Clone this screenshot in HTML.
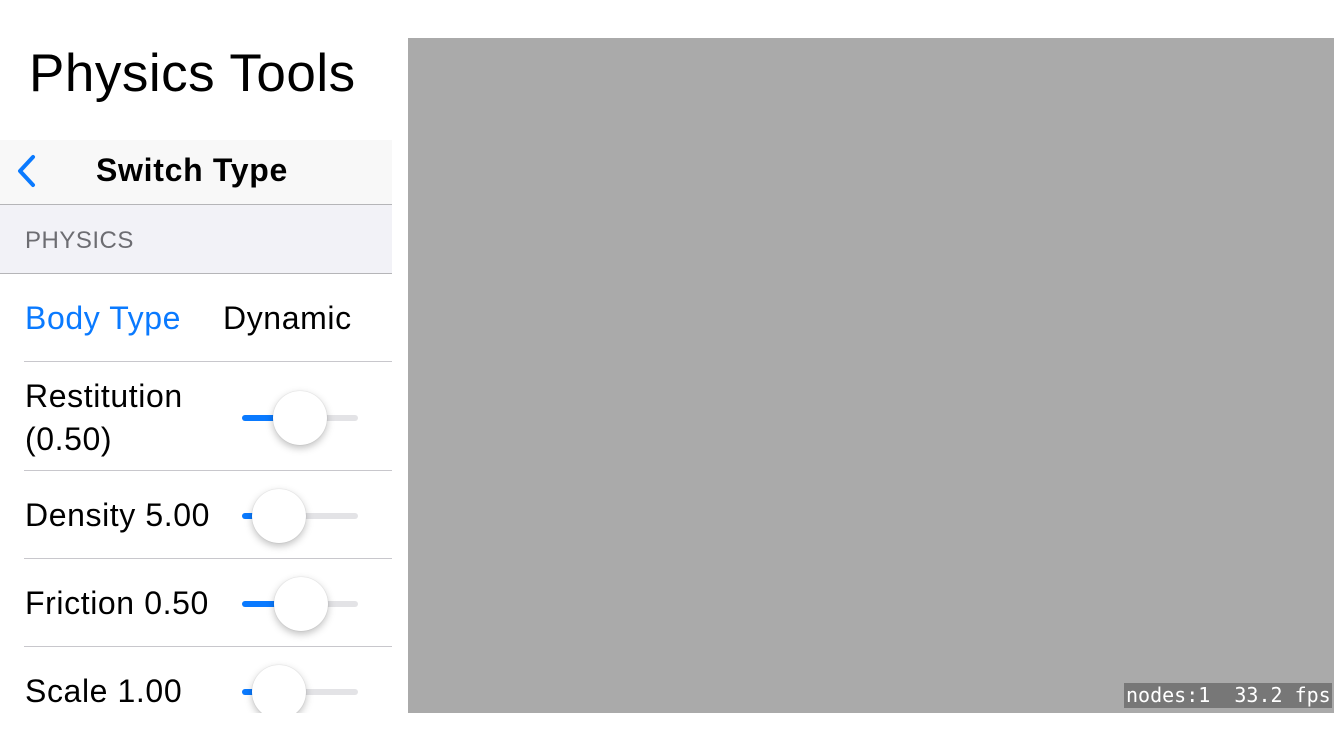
<!DOCTYPE html>
<html><head><style>
body{margin:0;width:1334px;height:750px;background:#fff;position:relative;overflow:hidden;font-family:"Liberation Sans",sans-serif}
.a{position:absolute}
.sep{position:absolute;height:1px;background:#c8c7cc}
.t{position:absolute;font-size:32px;letter-spacing:0.6px;color:#000;white-space:nowrap}
.track{position:absolute;left:242px;width:116px;height:6px;border-radius:3px;background:#e3e3e6}
.fill{position:absolute;left:0;top:0;height:6px;border-radius:3px;background:#0a7aff}
.knob{position:absolute;width:54px;height:54px;border-radius:50%;background:#fff;box-shadow:0 3px 8px rgba(0,0,0,.25),0 0 1px rgba(0,0,0,.2)}
</style></head><body>
<div class="t" style="left:29px;top:43px;font-size:53px;letter-spacing:0.5px">Physics Tools</div>
<div class="a" style="left:0;top:140px;width:392px;height:64px;background:#f8f8f8"></div>
<svg class="a" style="left:14px;top:154px" width="26" height="34"><path d="M19 3 L6 17 L19 31" stroke="#0a7aff" stroke-width="4" fill="none" stroke-linecap="round" stroke-linejoin="round"/></svg>
<div class="t" style="left:96px;top:152px;font-weight:bold;letter-spacing:0.7px">Switch Type</div>
<div class="sep" style="left:0;top:204px;width:392px;background:#b5b5b8"></div>
<div class="a" style="left:0;top:205px;width:392px;height:68px;background:#f2f2f7"></div>
<div class="t" style="left:25px;top:227px;font-size:24px;letter-spacing:0.5px;color:#6d6d72">PHYSICS</div>
<div class="sep" style="left:0;top:273px;width:392px;background:#b5b5b8"></div>
<div class="t" style="left:25px;top:300px;color:#0a7aff">Body Type</div>
<div class="t" style="left:223px;top:300px">Dynamic</div>
<div class="sep" style="left:24px;top:361px;width:368px"></div>
<div class="t" style="left:25px;top:375px;line-height:43px">Restitution<br>(0.50)</div>
<div class="track" style="top:415px"><div class="fill" style="width:58px"></div></div>
<div class="knob" style="left:273px;top:391px"></div>
<div class="sep" style="left:24px;top:470px;width:368px"></div>
<div class="t" style="left:25px;top:497px">Density 5.00</div>
<div class="track" style="top:513px"><div class="fill" style="width:37px"></div></div>
<div class="knob" style="left:252px;top:489px"></div>
<div class="sep" style="left:24px;top:558px;width:368px"></div>
<div class="t" style="left:25px;top:585px">Friction 0.50</div>
<div class="track" style="top:601px"><div class="fill" style="width:59px"></div></div>
<div class="knob" style="left:274px;top:577px"></div>
<div class="sep" style="left:24px;top:646px;width:368px"></div>
<div class="t" style="left:25px;top:673px">Scale 1.00</div>
<div class="track" style="top:689px"><div class="fill" style="width:37px"></div></div>
<div class="knob" style="left:252px;top:665px"></div>
<div class="a" style="left:0;top:713px;width:408px;height:37px;background:#fff"></div>
<div class="a" style="left:408px;top:38px;width:926px;height:675px;background:#aaa"></div>
<div class="a" style="left:1124px;top:683px;width:208px;height:25px;background:#777;color:#fff;font-family:'DejaVu Sans Mono','Liberation Mono',monospace;font-size:20px;line-height:25px;white-space:pre;padding-left:2px;box-sizing:border-box;overflow:hidden">nodes:1  33.2 fps</div>
</body></html>
